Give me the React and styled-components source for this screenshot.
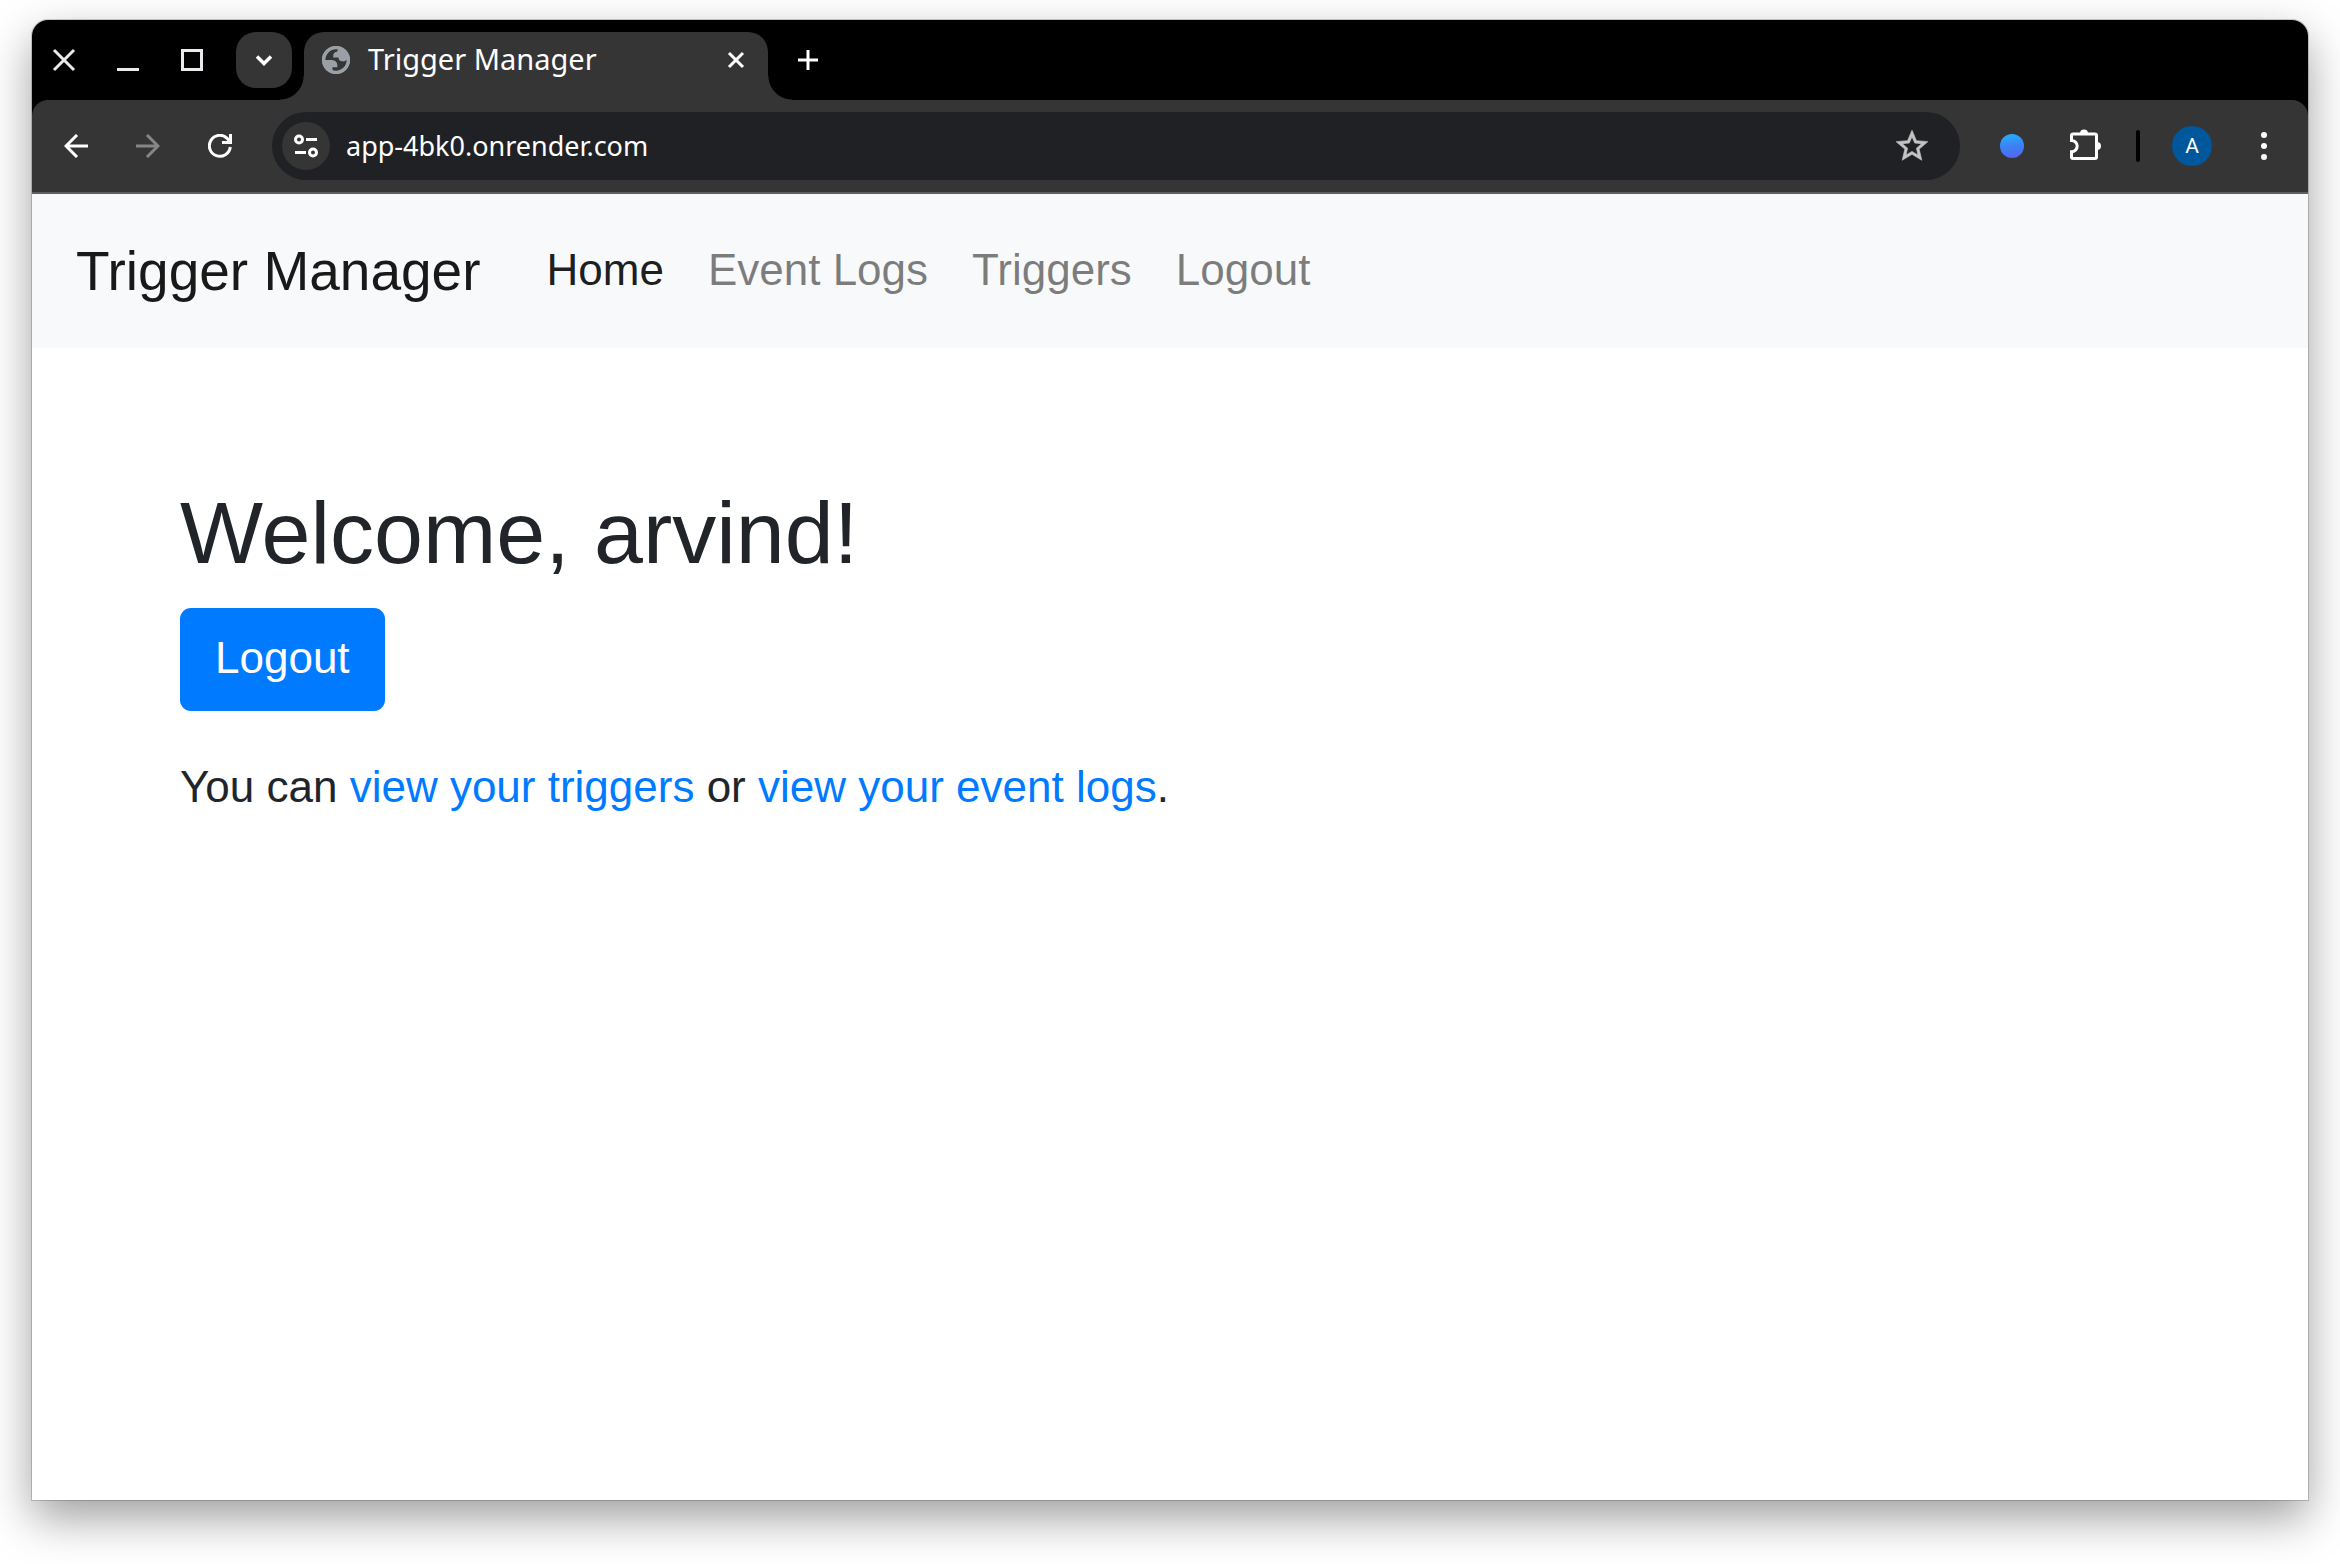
import React from "react";
import styled, { createGlobalStyle } from "styled-components";

const uiFont = `"Noto Sans", "Open Sans", sans-serif`;
const pageFont = `"Liberation Sans", Arial, sans-serif`;

const GlobalStyle = createGlobalStyle`
  *, *::before, *::after { box-sizing: border-box; }
  body { margin: 0; background: #fff; }
  button, input { font: inherit; }
`;

const Desktop = styled.div`
  display: flex;
  min-height: 100vh;
  padding: 20px 32px 64px;
`;

const BrowserWindow = styled.div`
  flex: 1;
  min-width: 0;
  display: flex;
  flex-direction: column;
  background: #fff;
  border-radius: 16px 16px 0 0;
  box-shadow: 0 0 0 1px rgba(0, 0, 0, 0.18), 0 18px 46px rgba(0, 0, 0, 0.38);
`;

const Chrome = styled.header`
  background: #000;
  border-radius: 16px 16px 0 0;
  font-family: ${uiFont};
  color: #fff;
`;

const TabStrip = styled.div`
  display: flex;
  height: 80px;
  padding-top: 12px;
`;

const IconButton = styled.button`
  display: flex;
  flex: none;
  align-items: center;
  justify-content: center;
  width: ${(p) => p.$width || 72}px;
  height: ${(p) => p.$height || 56}px;
  padding: 0;
  border: 0;
  border-radius: ${(p) => p.$radius || 0}px;
  background: ${(p) => p.$background || "transparent"};
  color: ${(p) => p.$color || "#fff"};

  svg { display: block; flex: none; }
`;

const TabSearch = styled(IconButton)`
  margin: 0 12px;
`;

const Tab = styled.div`
  position: relative;
  display: flex;
  flex: 0 1 464px;
  align-items: center;
  gap: 18px;
  margin-right: 12px;
  padding: 0 18px 12px;
  border-radius: 20px 20px 0 0;
  background: #353535;

  &::before,
  &::after {
    content: "";
    position: absolute;
    bottom: 0;
    width: 24px;
    height: 24px;
  }
  &::before {
    right: 100%;
    background: radial-gradient(circle at 0 0, transparent 23px, #353535 24px);
  }
  &::after {
    left: 100%;
    background: radial-gradient(circle at 100% 0, transparent 23px, #353535 24px);
  }
  svg { display: block; flex: none; }
`;

const TabTitle = styled.span`
  flex: 1;
  padding-bottom: 2px;
  font-size: 29px;
  line-height: 40px;
  white-space: nowrap;
`;

const Toolbar = styled.div`
  display: flex;
  align-items: center;
  padding: 12px 8px;
  border-bottom: 2px solid #5f5f5f;
  border-radius: 16px 16px 0 0;
  background: #353535;
`;

const AddressBar = styled.div`
  display: flex;
  flex: 1;
  min-width: 0;
  align-items: center;
  height: 68px;
  margin: 0 16px;
  padding: 0 12px 0 10px;
  border-radius: 34px;
  background: #202124;
`;

const AddressInput = styled.input`
  flex: 1;
  min-width: 0;
  padding: 0 16px;
  border: 0;
  outline: 0;
  background: transparent;
  color: #fff;
  font-size: 27px;
  line-height: 40px;
`;

const ExtensionDot = styled.span`
  width: 24px;
  height: 24px;
  border-radius: 50%;
  background: linear-gradient(170deg, #24b0fb 5%, #3b82f6 50%, #5364f0 95%);
`;

const Divider = styled.span`
  width: 4px;
  height: 32px;
  margin: 0 16px;
  border-radius: 2px;
  background: #000;
`;

const Avatar = styled.span`
  width: 40px;
  height: 40px;
  border-radius: 50%;
  background: #01579b;
  font-family: Roboto, sans-serif;
  font-size: 21px;
  line-height: 40px;
`;

const Navbar = styled.nav`
  display: flex;
  flex-wrap: wrap;
  align-items: center;
  padding: 22px 44px;
  background: #f8f9fa;
  font-family: ${pageFont};
`;

const Brand = styled.a`
  margin-right: 44px;
  padding: 13px 0;
  color: rgba(0, 0, 0, 0.9);
  font-size: 55px;
  line-height: 84px;
  text-decoration: none;
  white-space: nowrap;
`;

const NavList = styled.ul`
  display: flex;
  margin: 0;
  padding: 0;
  list-style: none;
`;

const NavLink = styled.a`
  display: block;
  padding: 21px 22px 23px;
  color: rgba(0, 0, 0, ${(p) => (p.$active ? 0.9 : 0.5)});
  font-size: 44px;
  line-height: 66px;
  text-decoration: none;
  white-space: nowrap;
`;

const Content = styled.main`
  width: 100%;
  max-width: 1980px;
  margin: 132px auto 0;
  color: #212529;
  font-family: ${pageFont};
  font-size: 44px;
  line-height: 66px;
`;

const Title = styled.h2`
  margin: 0 0 22px;
  font-size: 88px;
  font-weight: 500;
  line-height: 106px;
`;

const PrimaryButton = styled.button`
  display: block;
  padding: 15px 33px 18px;
  border: 2px solid #007bff;
  border-radius: 11px;
  background: #007bff;
  color: #fff;
  line-height: 66px;
`;

const Hint = styled.p`
  margin: 43px 0;

  a { color: #007bff; text-decoration: none; }
`;

const Stroke = ({ size = 24, width = 3, children, ...rest }) => (
  <svg width={size} height={size} viewBox={`0 0 ${size} ${size}`} fill="none" stroke="currentColor" strokeWidth={width} aria-hidden="true" {...rest}>
    {children}
  </svg>
);

const navItems = ["Home", "Event Logs", "Triggers", "Logout"];

export default function App() {
  return (
    <Desktop>
      <GlobalStyle />
      <BrowserWindow>
        <Chrome>
          <TabStrip>
            <IconButton $width={64} $color="#e8eaed" aria-label="Close window">
              <Stroke><path d="M2 2 22 22M22 2 2 22" /></Stroke>
            </IconButton>
            <IconButton $width={64} $color="#e8eaed" aria-label="Minimize">
              <Stroke><path d="M1 21.500H23" /></Stroke>
            </IconButton>
            <IconButton $width={64} $color="#e8eaed" aria-label="Maximize">
              <Stroke><rect x="2.500" y="2.500" width="19" height="19" /></Stroke>
            </IconButton>
            <TabSearch $width={56} $radius={20} $background="#353535" aria-label="Search tabs">
              <Stroke width={3.5}><path d="M5 8.500 12 15.500 19 8.500" /></Stroke>
            </TabSearch>
            <Tab>
              <svg width="28" height="28" viewBox="2 2 20 20" fill="#9aa0a6" aria-hidden="true">
                <path fillRule="evenodd" d="M12 2C6.480 2 2 6.480 2 12s4.480 10 10 10 10-4.480 10-10S17.520 2 12 2zM4 12h4.400c3.407.022 4.922 1.730 4.543 5.127H9.488v2.470a8.004 8.004 0 0 0 10.498-8.083C19.327 12.504 18.332 13 17 13c-2.137 0-3.206-.916-3.206-2.750h-3.748c-.274-2.728.683-4.092 2.870-4.092 0-.975.327-1.597.811-1.970A8.004 8.004 0 0 0 4 12z" />
                <circle cx="12" cy="12" r="8.800" fill="none" stroke="#9aa0a6" strokeWidth="2.4" />
              </svg>
              <TabTitle>Trigger Manager</TabTitle>
              <IconButton $width={28} $height={28} aria-label="Close tab">
                <Stroke><path d="M5 5 19 19M19 5 5 19" /></Stroke>
              </IconButton>
            </Tab>
            <IconButton $width={56} aria-label="New tab">
              <Stroke><path d="M12 2V22M2 12H22" /></Stroke>
            </IconButton>
          </TabStrip>
          <Toolbar>
            <IconButton aria-label="Back">
              <Stroke><path d="M24 12H2M13 1 2 12 13 23" /></Stroke>
            </IconButton>
            <IconButton $color="#868686" aria-label="Forward">
              <Stroke><path d="M0 12H22M11 1 22 12 11 23" /></Stroke>
            </IconButton>
            <IconButton aria-label="Reload">
              <Stroke><path d="M22.300 13A10.500 10.500 0 1 1 19.500 4.600L22 8M22.500 0V8.500H14" /></Stroke>
            </IconButton>
            <AddressBar>
              <IconButton $width={48} $height={48} $radius={24} $background="#353535" aria-label="View site information">
                <Stroke size={26}>
                  <circle cx="6" cy="6.500" r="3.500" />
                  <path d="M13 6.500H24M2 19.500H13" />
                  <circle cx="20" cy="19.500" r="3.500" />
                </Stroke>
              </IconButton>
              <AddressInput aria-label="Address" defaultValue="app-4bk0.onrender.com" spellCheck={false} />
              <IconButton $color="#c4c4c4" aria-label="Bookmark this tab">
                <svg width="38" height="38" viewBox="0 0 24 24" fill="currentColor" stroke="currentColor" strokeWidth="0.4" aria-hidden="true">
                  <path d="m22 9.240-7.190-.620L12 2 9.190 8.630 2 9.240l5.460 4.730L5.820 21 12 17.270 18.180 21l-1.630-7.030L22 9.240zM12 15.400l-3.760 2.270 1-4.280-3.320-2.880 4.380-.380L12 6.100l1.710 4.040 4.380.380-3.320 2.880 1 4.280L12 15.400z" />
                </svg>
              </IconButton>
            </AddressBar>
            <IconButton aria-label="Extension"><ExtensionDot /></IconButton>
            <IconButton aria-label="Extensions">
              <Stroke size={36}>
                <g transform="translate(0 -1)">
                  <path d="M7 7H29A1.500 1.500 0 0 1 30.500 8.500V30A1.500 1.500 0 0 1 29 31.500H7A1.500 1.500 0 0 1 5.500 30V24.800A5.700 5.700 0 0 0 5.500 13.400V8.500A1.500 1.500 0 0 1 7 7Z" />
                  <path d="M14 6.500A4 4 0 0 1 22 6.500ZM31 15A4 4 0 0 1 31 23Z" fill="currentColor" stroke="none" />
                </g>
              </Stroke>
            </IconButton>
            <Divider />
            <IconButton aria-label="Profile"><Avatar>A</Avatar></IconButton>
            <IconButton aria-label="Menu">
              <svg width="28" height="28" viewBox="0 0 28 28" fill="currentColor" aria-hidden="true">
                <circle cx="14" cy="3" r="3" />
                <circle cx="14" cy="14" r="3" />
                <circle cx="14" cy="25" r="3" />
              </svg>
            </IconButton>
          </Toolbar>
        </Chrome>
        <Navbar>
          <Brand href="#">Trigger Manager</Brand>
          <NavList>
            {navItems.map((item, i) => (
              <li key={item}>
                <NavLink href="#" $active={i === 0}>{item}</NavLink>
              </li>
            ))}
          </NavList>
        </Navbar>
        <Content>
          <Title>Welcome, arvind!</Title>
          <PrimaryButton type="button">Logout</PrimaryButton>
          <Hint>
            You can <a href="#">view your triggers</a> or <a href="#">view your event logs</a>.
          </Hint>
        </Content>
      </BrowserWindow>
    </Desktop>
  );
}
